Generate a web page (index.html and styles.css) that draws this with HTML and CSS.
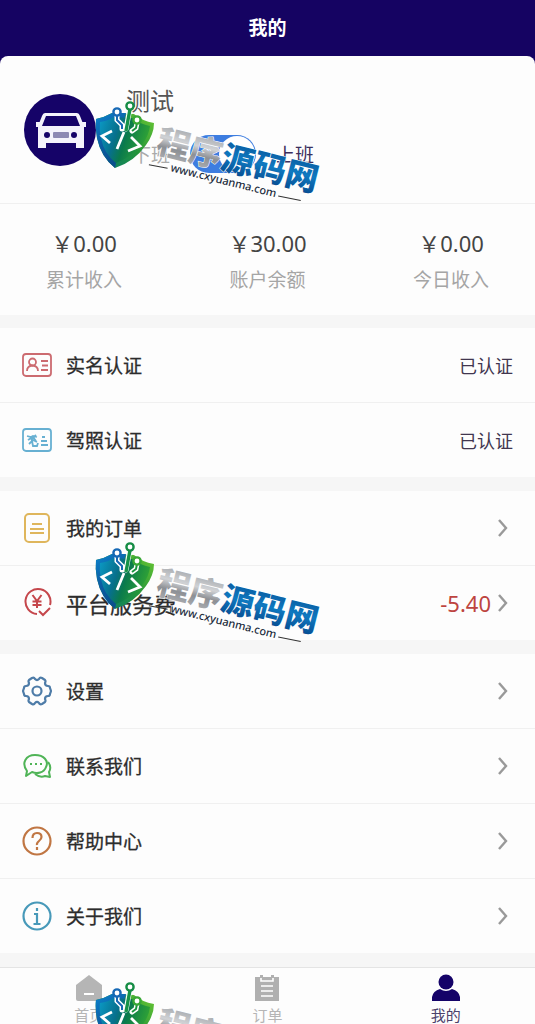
FILE: index.html
```html
<!DOCTYPE html>
<html lang="zh-CN">
  <head>
    <meta charset="utf-8" />
    <meta name="viewport" content="width=device-width, initial-scale=1" />
    <title>我的</title>

    <link rel="stylesheet" href="styles.css">
  </head>
  <body>
    <!-- shared shapes -->
    <svg class="defs" width="0" height="0" aria-hidden="true">
      <defs>
        <linearGradient id="shieldBlue" x1="0" y1="0" x2="0.4" y2="1">
          <stop offset="0" stop-color="#0d84cc" />
          <stop offset="0.5" stop-color="#0c5fa6" />
          <stop offset="1" stop-color="#0a4f8c" />
        </linearGradient>
        <linearGradient id="shieldGreen" x1="1" y1="0" x2="0" y2="1">
          <stop offset="0" stop-color="#6cc832" />
          <stop offset="0.5" stop-color="#22943a" />
          <stop offset="1" stop-color="#087a70" />
        </linearGradient>
        <linearGradient id="shieldInner" x1="0" y1="0" x2="1" y2="0.3">
          <stop offset="0" stop-color="#0b9ac6" />
          <stop offset="0.4" stop-color="#07708c" />
          <stop offset="0.6" stop-color="#0a7a4c" />
          <stop offset="1" stop-color="#2fa236" />
        </linearGradient>
        <linearGradient id="silver" x1="0" y1="0" x2="0" y2="1">
          <stop offset="0" stop-color="#8f9296" />
          <stop offset="0.45" stop-color="#d0d2d5" />
          <stop offset="0.65" stop-color="#8d9095" />
          <stop offset="1" stop-color="#b8babd" />
        </linearGradient>
        <linearGradient id="blue" x1="0" y1="0" x2="0" y2="1">
          <stop offset="0" stop-color="#064f93" />
          <stop offset="0.5" stop-color="#0f79c0" />
          <stop offset="1" stop-color="#053f83" />
        </linearGradient>
        <symbol id="shield" viewBox="0 0 66 74">
          <path d="M6 24Q15 22 22 18L44 19Q52 26 64 28Q64 39 56 50Q44 67 25 73Q11 62 7 43Q5 33 6 24z" fill="url(#shieldGreen)" />
          <path d="M6 24Q15 22 22 18L36 18L25 73Q11 62 7 43Q5 33 6 24z" fill="url(#shieldBlue)" />
          <path d="M10 27Q18 26 24 22L42 23Q50 29 60 31Q59 40 53 48Q42 62 26 68Q14 59 11 43Q9 35 10 27z" fill="url(#shieldInner)" />
          <g fill="none" stroke="#fff" stroke-linecap="round">
            <path d="M27 19v6l5 5v4M40 13L36 34M47 28l-1 5l-4 3" stroke-width="5" />
          </g>
          <g fill="none" stroke-width="2">
            <path d="M27 19v6l5 5v4" stroke="#1769b5" />
            <path d="M40 14L36 36" stroke="#169347" stroke-width="3.4" />
            <path d="M47 28l-1 5l-4 3" stroke="#1a963e" />
            <circle cx="27" cy="17" r="3.6" fill="#fff" stroke="#1769b5" stroke-width="2.4" />
            <circle cx="40" cy="11" r="3.6" fill="#fff" stroke="#158c45" stroke-width="2.4" />
            <circle cx="47" cy="25" r="3.6" fill="#fff" stroke="#38a735" stroke-width="2.4" />
          </g>
          <path d="M22 36L12 41L20 48M34 37L27 54M41 42L50 51L38 56" fill="none" stroke="#fff" stroke-width="2.8" />
        </symbol>
        <symbol id="arrow" viewBox="0 0 12 20">
          <path d="M2 2L9 10L2 18" fill="none" stroke="#999" stroke-width="2.4" />
        </symbol>
      </defs>
    </svg>

    <div class="page">
      <div class="top">
        <header class="header"><h1>我的</h1></header>

        <section class="profile">
          <svg class="avatar" viewBox="0 0 72 72" aria-hidden="true">
            <circle cx="36" cy="36" r="36" fill="#150368" />
            <path d="M21 19h32q2 0 3 3l4 10v22h-8v-5H22v5h-8V32l4-10q1-3 3-3z" fill="#f4f3fb" />
            <path d="M22 22h30l4 10H18z" fill="#150368" />
            <path d="M12 28h6v5h-6zM56 28h6v5h-6z" fill="#f4f3fb" />
            <circle cx="23" cy="41" r="3" fill="#150368" />
            <circle cx="50" cy="41" r="3" fill="#150368" />
            <rect x="29" y="38" width="16" height="6" rx="1" fill="#8d89b3" />
          </svg>
          <div class="user">
            <p class="name">测试</p>
            <div class="work">
              <span class="off">下班</span>
              <input type="checkbox" class="switch" id="work" checked />
              <label for="work">上班</label>
            </div>
          </div>
        </section>
      </div>

      <section class="stats">
        <div><b>￥0.00</b><span>累计收入</span></div>
        <div><b>￥30.00</b><span>账户余额</span></div>
        <div><b>￥0.00</b><span>今日收入</span></div>
      </section>

      <div class="group">
        <a class="row" href="#">
          <svg class="icon" viewBox="0 0 30 30" fill="none" stroke="#cc6b70" stroke-width="1.8">
            <rect x="1" y="4" width="28" height="22" rx="3" />
            <circle cx="10.500" cy="12" r="3.500" />
            <path d="M5 21q0-5 5.500-5.500q5.500 .5 5.500 5.500M19 11h7M20 15.500h6M19 20h7" />
          </svg>
          <span class="label">实名认证</span>
          <span class="state">已认证</span>
        </a>
        <a class="row" href="#">
          <svg class="icon" viewBox="0 0 30 30" fill="none" stroke="#67b0d2" stroke-width="1.8">
            <rect x="1" y="4" width="28" height="22" rx="3" />
            <path d="M5 11l4 1l2-1l4 1M6 15l5-3l3 4M7 19l4-4l4 2M9 11l2 10h4l1-3M12 12l2-2M20 12h3M19 16h6M19 20h7" />
          </svg>
          <span class="label">驾照认证</span>
          <span class="state">已认证</span>
        </a>
      </div>

      <div class="group">
        <a class="row" href="#">
          <svg class="icon" viewBox="0 0 30 30" fill="none" stroke="#dfb65c" stroke-width="2">
            <rect x="3" y="1" width="24" height="28" rx="4" />
            <path d="M10 11h10M8 16h14M8 20h14" />
          </svg>
          <span class="label">我的订单</span>
          <svg class="arrow"><use href="#arrow" /></svg>
        </a>
        <a class="row" href="#">
          <svg class="icon" viewBox="0 0 30 30" fill="none" stroke="#c5474c" stroke-width="2">
            <path d="M15 26A12.500 12.500 0 1 1 28 17M17 23l4 4l7-7" />
            <path d="M10.500 7l4.500 6l4.500-6M15 13v7M10.500 13.500h9M10.500 17h9" />
          </svg>
          <span class="label large">平台服务费</span>
          <span class="fee">-5.40</span>
          <svg class="arrow"><use href="#arrow" /></svg>
        </a>
      </div>

      <div class="group">
        <a class="row" href="#">
          <svg class="icon" viewBox="0 0 30 30" fill="none" stroke="#4e7ca8" stroke-width="2.2" stroke-linejoin="round">
            <path d="M10 2Q12 1 13 3Q15 5 17 3Q18 1 20 2L23 4Q24 5 23 7Q23 10 26 10Q28 10 28 12L29 15L28 18Q28 20 26 20Q23 20 23 23Q24 25 23 26L20 28Q18 29 17 27Q15 25 13 27Q12 29 10 28L7 26Q6 25 7 23Q7 20 4 20Q2 20 2 18L1 15L2 12Q2 10 4 10Q7 10 7 7Q6 5 7 4z" />
            <circle cx="15" cy="15" r="4.500" />
          </svg>
          <span class="label">设置</span>
          <svg class="arrow"><use href="#arrow" /></svg>
        </a>
        <a class="row" href="#">
          <svg class="icon" viewBox="0 0 30 30" fill="none" stroke="#50b457" stroke-width="2" stroke-linejoin="round">
            <path d="M4 25l1-5C-1 12 4 4 13 4s14 6 11 12c-2 6-9 7-14 5z" />
            <path d="M26 11q4 5 1 10l1 5l-5-1q-5 2-10-2" />
            <path d="M8 13h2M13 13h2M18 13h2" />
          </svg>
          <span class="label">联系我们</span>
          <svg class="arrow"><use href="#arrow" /></svg>
        </a>
        <a class="row" href="#">
          <svg class="icon" viewBox="0 0 30 30" fill="none" stroke="#c07643" stroke-width="2.2">
            <circle cx="15" cy="15" r="13.500" />
            <path d="M10.500 12q0-5 4.500-5t4.500 4q0 2-2.500 4t-2 4M15 21v3" />
          </svg>
          <span class="label">帮助中心</span>
          <svg class="arrow"><use href="#arrow" /></svg>
        </a>
        <a class="row" href="#">
          <svg class="icon" viewBox="0 0 30 30" fill="none" stroke="#4799b9" stroke-width="2.2">
            <circle cx="15" cy="15" r="13.500" />
            <path d="M15 7v3M12 13h3v10M11.500 23h7" />
          </svg>
          <span class="label">关于我们</span>
          <svg class="arrow"><use href="#arrow" /></svg>
        </a>
      </div>

      <nav class="tabs">
        <a href="#">
          <svg viewBox="0 0 28 28" aria-hidden="true">
            <path d="M14 1L27 11V25q0 2-2 2H3q-2 0-2-2V11z" fill="#b5b5b5" />
            <path d="M9 20h10" stroke="#fff" stroke-width="2" />
          </svg>
          首页
        </a>
        <a href="#">
          <svg viewBox="0 0 28 28" aria-hidden="true">
            <path d="M2 3h5V1h3v2h8V1h3v2h5v24H2z" fill="#b0b0b0" />
            <path d="M8 4v3h12V4M8 12h12M8 17h12M8 22h12" fill="none" stroke="#fff" stroke-width="1.6" />
          </svg>
          订单
        </a>
        <a href="#" class="active">
          <svg viewBox="0 0 28 28" aria-hidden="true">
            <circle cx="14" cy="8" r="7.500" fill="#150368" />
            <path d="M0 27V23Q1 17 8 15Q14 19 20 15Q27 17 28 23V27z" fill="#150368" />
          </svg>
          我的
        </a>
      </nav>

      <!-- site marks lying over the page -->
      <svg class="mark mark-1" viewBox="0 0 240 115">
        <use href="#shield" width="66" height="74" />
        <g transform="translate(65 57) rotate(14)">
          <text class="mark-name"><tspan fill="url(#silver)">程序</tspan><tspan fill="url(#blue)">源码网</tspan></text>
        </g>
        <g transform="translate(80 76) rotate(14)">
          <text class="mark-url">www.cxyuanma.com</text>
          <path d="M-22 -1L-3 -2M111 -2L134 -3" stroke="#333" />
        </g>
      </svg>
      <svg class="mark mark-2" viewBox="0 0 240 115">
        <use href="#shield" width="66" height="74" />
        <g transform="translate(65 57) rotate(14)">
          <text class="mark-name"><tspan fill="url(#silver)">程序</tspan><tspan fill="url(#blue)">源码网</tspan></text>
        </g>
        <g transform="translate(80 76) rotate(14)">
          <text class="mark-url">www.cxyuanma.com</text>
          <path d="M-22 -1L-3 -2M111 -2L134 -3" stroke="#333" />
        </g>
      </svg>
      <svg class="mark mark-3" viewBox="0 0 240 115">
        <use href="#shield" width="66" height="74" />
        <g transform="translate(65 57) rotate(14)">
          <text class="mark-name"><tspan fill="url(#silver)">程序</tspan></text>
        </g>
      </svg>
    </div>
  </body>
</html>
```
FILE: styles.css
```css
* {
  box-sizing: border-box;
}
body {
  margin: 0;
  background-color: #f6f6f6;
  color: #2c2c2c;
  font-family: "Noto Sans", "Noto Sans CJK SC", sans-serif;
  font-size: 19px;
}
a {
  color: inherit;
  text-decoration: none;
}
.defs {
  position: absolute;
}
.page {
  position: relative;
  overflow: hidden;
  min-height: 100vh;
}

/* header and driver */
.top {
  background-color: #150362;
}
.header {
  height: 56px;
  display: flex;
  align-items: center;
  justify-content: center;
}
.header h1 {
  margin: 0;
  color: #fff;
  font-size: 19px;
  line-height: 32px;
}
.profile {
  display: flex;
  align-items: center;
  gap: 30px;
  height: 148px;
  padding: 0 24px;
  background-color: #fdfdfd;
  border-bottom: 1px solid #f0f0f0;
  border-radius: 8px 8px 0 0;
}
.avatar {
  width: 72px;
  height: 72px;
}
.user {
  padding-bottom: 4px;
}
.name {
  margin: 0 0 16px;
  color: #555;
  font-size: 24px;
  line-height: 36px;
}
.work {
  display: flex;
  align-items: center;
  gap: 20px;
  padding-left: 6px;
  color: #3b2f5c;
}
.work .off {
  color: #aaa;
}
.switch {
  appearance: none;
  width: 66px;
  height: 38px;
  margin: 0;
  border-radius: 19px;
  background-color: #ccc;
  cursor: pointer;
}
.switch::before {
  content: "";
  display: block;
  width: 36px;
  height: 36px;
  margin: 1px;
  border-radius: 50%;
  background-color: #fff;
}
.switch:checked {
  background-color: #3d7de0;
}
.switch:checked::before {
  margin-left: 29px;
}

/* income */
.stats {
  display: flex;
  justify-content: space-between;
  padding: 24px 46px 20px;
  background-color: #fdfdfd;
}
.stats div {
  display: flex;
  flex-direction: column;
  align-items: center;
  gap: 7px;
  width: 76px;
  white-space: nowrap;
}
.stats b {
  color: #444;
  font-size: 22px;
  font-weight: normal;
  line-height: 30px;
}
.stats span {
  color: #a5a5a5;
  line-height: 30px;
}

/* menu */
.group {
  margin-top: 14px;
  background-color: #fdfdfd;
}
.stats + .group {
  margin-top: 13px;
}
.row {
  display: flex;
  align-items: center;
  height: 75px;
  padding: 0 22px;
  border-bottom: 1px solid #f0f0f0;
}
.row:last-child {
  height: 74px;
  border-bottom: none;
}
.icon {
  width: 30px;
  height: 30px;
  margin-right: 14px;
}
.label {
  flex: 1;
  -webkit-text-stroke: 0.3px #2c2c2c;
}
.large {
  font-size: 22px;
}
.state {
  color: #41364f;
  font-size: 18px;
}
.fee {
  color: #bd4440;
  font-size: 22px;
}
.arrow {
  width: 12px;
  height: 20px;
  margin: 0 4px 0 6px;
}

/* bottom tabs */
.tabs {
  display: flex;
  margin-top: 14px;
  background-color: #fdfdfd;
  border-top: 1px solid #e4e4e4;
}
.tabs a {
  flex: 1;
  display: flex;
  flex-direction: column;
  align-items: center;
  gap: 4px;
  padding-top: 6px;
  color: #b5b5b5;
  font-size: 15px;
  line-height: 18px;
}
.tabs svg {
  width: 28px;
  height: 28px;
}
.tabs .active {
  color: #4b426b;
}

/* marks */
.mark {
  position: absolute;
  left: 90px;
  width: 240px;
  height: 115px;
  pointer-events: none;
}
.mark-1 {
  top: 95px;
}
.mark-2 {
  top: 536px;
}
.mark-3 {
  top: 976px;
}
.mark-name {
  font-family: "Noto Sans CJK SC", sans-serif;
  font-size: 33px;
  font-weight: 900;
  stroke: #fff;
  stroke-width: 1px;
  paint-order: stroke;
}
.mark-url {
  fill: #222c3c;
  font-family: "Noto Sans", sans-serif;
  font-size: 11px;
  font-weight: 500;
  stroke: #fff;
  stroke-width: 1px;
  paint-order: stroke;
}
```
